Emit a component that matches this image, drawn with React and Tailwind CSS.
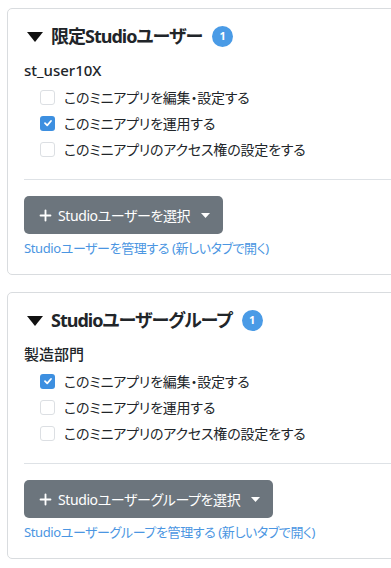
import { Plus } from 'lucide-react'

const font = { fontFamily: '"Noto Sans", "Noto Sans CJK JP", sans-serif' }

const perms = ['このミニアプリを編集・設定する', 'このミニアプリを運用する', 'このミニアプリのアクセス権の設定をする']

function Check({ checked }) {
  if (checked) {
    return (
      <span className="w-[15px] h-[15px] rounded-[3px] bg-[#3d8fe0] flex items-center justify-center shrink-0">
        <svg width="10" height="10" viewBox="0 0 10 10">
          <path d="M2 5.2 L4.2 7.3 L8 3" fill="none" stroke="#fff" strokeWidth="1.8" strokeLinecap="round" strokeLinejoin="round" />
        </svg>
      </span>
    )
  }
  return <span className="w-[15px] h-[15px] rounded-[3px] border border-[#dcdfe3] bg-white shrink-0" />
}

function Section({ title, name, checked, button, link }) {
  return (
    <div className="w-[420px] border border-[#d9dcdf] rounded-[5px] bg-white px-4 pt-4 pb-4 mb-[17px]">
      <div className="flex items-center h-[23px]">
        <svg width="16" height="10" viewBox="0 0 16 10" className="ml-[3px] mr-[8px]">
          <path d="M0 0 H16 L8 10 Z" fill="#111" />
        </svg>
        <span className="text-[18px] font-bold text-[#212529] tracking-[-1px]">{title}</span>
        <span className="ml-[10px] w-[21px] h-[21px] rounded-full bg-[#4a9be6] text-white text-[11px] font-bold flex items-center justify-center">1</span>
      </div>
      <div className="mt-[10px] text-[15px] leading-[24px] font-medium text-[#212529]">{name}</div>
      <div className="mt-[2px] pl-4">
        {perms.map((p, i) => (
          <div key={p} className="flex items-center h-[26px] gap-[9px]">
            <Check checked={checked === i} />
            <span className="text-[14px] text-[#212529] tracking-[-0.2px]">{p}</span>
          </div>
        ))}
      </div>
      <div className="mt-[17px] border-t border-[#dee2e6]" />
      <button className="mt-4 h-[38px] px-[13px] rounded-[5px] bg-[#6c757d] text-white flex items-center text-[14px] tracking-[-0.4px]">
        <Plus className="w-[17px] h-[17px] mr-[4px]" strokeWidth={2.6} />
        {button}
        <svg width="9" height="5" viewBox="0 0 9 5" className="ml-[11px]">
          <path d="M0 0 H9 L4.5 5 Z" fill="#fff" />
        </svg>
      </button>
      <div className="mt-[4px] h-[20px] leading-[20px] text-[13px] text-[#4b96e2] tracking-[-0.4px]">{link}</div>
    </div>
  )
}

export default function App() {
  return (
    <div
      className="w-[391px] h-[568px] overflow-hidden bg-white pt-2 pl-[7px] [font-feature-settings:'palt']"
      style={font}
    >
      <Section
        title="限定Studioユーザー"
        name="st_user10X"
        checked={1}
        button="Studioユーザーを選択"
        link="Studioユーザーを管理する (新しいタブで開く)"
      />
      <Section
        title="Studioユーザーグループ"
        name="製造部門"
        checked={0}
        button="Studioユーザーグループを選択"
        link="Studioユーザーグループを管理する (新しいタブで開く)"
      />
    </div>
  )
}
